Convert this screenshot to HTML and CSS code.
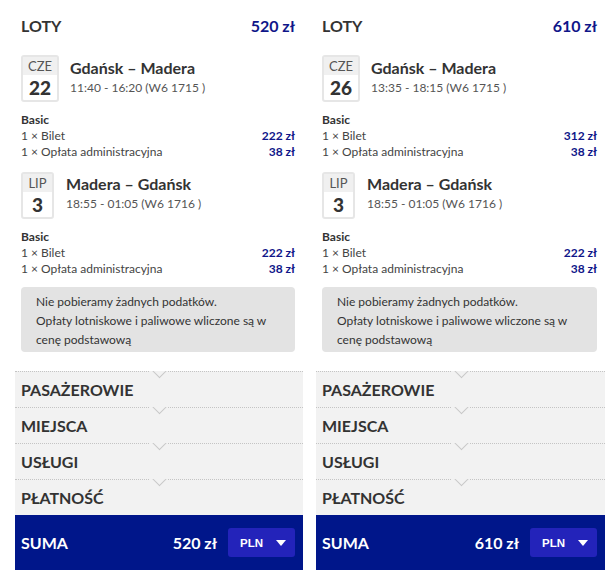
FILE: index.html
```html
<!DOCTYPE html>
<html lang="pl">
<head>
<meta charset="utf-8">
<link rel="stylesheet" href="styles.css">
</head>
<body>
<div class="page">
  <section class="col">
    <div class="content">
      <div class="head"><span class="h-title">LOTY</span><span class="h-price">520 zł</span></div>
      <div class="flight f1">
        <div class="date"><div class="dm">CZE</div><div class="dd">22</div></div>
        <div class="finfo"><div class="route">Gdańsk – Madera</div><div class="time">11:40 - 16:20 (W6 1715 )</div></div>
      </div>
      <div class="fare">
        <div class="fare-name">Basic</div>
        <div class="line"><span>1 × Bilet</span><b>222 zł</b></div>
        <div class="line"><span>1 × Opłata administracyjna</span><b>38 zł</b></div>
      </div>
      <div class="flight f2">
        <div class="date"><div class="dm">LIP</div><div class="dd">3</div></div>
        <div class="finfo"><div class="route">Madera – Gdańsk</div><div class="time">18:55 - 01:05 (W6 1716 )</div></div>
      </div>
      <div class="fare">
        <div class="fare-name">Basic</div>
        <div class="line"><span>1 × Bilet</span><b>222 zł</b></div>
        <div class="line"><span>1 × Opłata administracyjna</span><b>38 zł</b></div>
      </div>
      <div class="note">Nie pobieramy żadnych podatków.<br>Opłaty lotniskowe i paliwowe wliczone są w cenę podstawową</div>
    </div>
    <div class="steps">
      <div class="step"><span class="notch"></span>PASAŻEROWIE</div>
      <div class="step"><span class="notch"></span>MIEJSCA</div>
      <div class="step"><span class="notch"></span>USŁUGI</div>
      <div class="step"><span class="notch"></span>PŁATNOŚĆ</div>
    </div>
    <div class="sum">
      <span class="sum-label">SUMA</span>
      <span class="sum-val">520 zł</span>
      <span class="cur">PLN<span class="tri"></span></span>
    </div>
  </section>

  <section class="col">
    <div class="content">
      <div class="head"><span class="h-title">LOTY</span><span class="h-price">610 zł</span></div>
      <div class="flight f1">
        <div class="date"><div class="dm">CZE</div><div class="dd">26</div></div>
        <div class="finfo"><div class="route">Gdańsk – Madera</div><div class="time">13:35 - 18:15 (W6 1715 )</div></div>
      </div>
      <div class="fare">
        <div class="fare-name">Basic</div>
        <div class="line"><span>1 × Bilet</span><b>312 zł</b></div>
        <div class="line"><span>1 × Opłata administracyjna</span><b>38 zł</b></div>
      </div>
      <div class="flight f2">
        <div class="date"><div class="dm">LIP</div><div class="dd">3</div></div>
        <div class="finfo"><div class="route">Madera – Gdańsk</div><div class="time">18:55 - 01:05 (W6 1716 )</div></div>
      </div>
      <div class="fare">
        <div class="fare-name">Basic</div>
        <div class="line"><span>1 × Bilet</span><b>222 zł</b></div>
        <div class="line"><span>1 × Opłata administracyjna</span><b>38 zł</b></div>
      </div>
      <div class="note">Nie pobieramy żadnych podatków.<br>Opłaty lotniskowe i paliwowe wliczone są w cenę podstawową</div>
    </div>
    <div class="steps">
      <div class="step"><span class="notch"></span>PASAŻEROWIE</div>
      <div class="step"><span class="notch"></span>MIEJSCA</div>
      <div class="step"><span class="notch"></span>USŁUGI</div>
      <div class="step"><span class="notch"></span>PŁATNOŚĆ</div>
    </div>
    <div class="sum">
      <span class="sum-label">SUMA</span>
      <span class="sum-val">610 zł</span>
      <span class="cur">PLN<span class="tri"></span></span>
    </div>
  </section>
</div>
</body>
</html>
```

FILE: styles.css
```css
* { box-sizing: border-box; }
html, body { margin: 0; padding: 0; background: #fff; }
body {
  font-family: Lato, "Open Sans", "Liberation Sans", sans-serif;
  color: #333;
}
.page {
  display: grid;
  grid-template-columns: 288px 289px;
  column-gap: 13px;
  padding-left: 15px;
}
.col { display: flex; flex-direction: column; }
.content { padding: 0 8px 0 6px; }

.head {
  display: flex; justify-content: space-between; align-items: center;
  height: 30px; margin-top: 10px;
  font-weight: 700; font-size: 16px;
}
.h-title { color: #333; }
.h-price { color: #0f1689; }

.flight { display: flex; align-items: flex-start; }
.f1 { margin-top: 15px; }
.f2 { margin-top: 12px; }
.date {
  border: 2px solid #e6e6e6; border-radius: 3px;
  display: flex; flex-direction: column; align-items: stretch;
  text-align: center; height: 47px; padding: 0;
}
.f1 .date { width: 38px; }
.f2 .date { width: 33px; }
.dm {
  background: #f0f0f0; height: 18px; line-height: 18px;
  font-size: 13px; color: #555;
}
.dd {
  flex: 1; line-height: 25px; font-size: 19px; font-weight: 900; color: #333;
}
.finfo { margin-left: 11px; padding-top: 3px; }
.f2 .finfo { margin-left: 12px; padding-top: 2px; }
.route { font-size: 16px; font-weight: 700; color: #333; line-height: 20px; }
.time { font-size: 12px; color: #555; line-height: 18px; margin-top: 1px; }

.fare { margin-top: 10px; font-size: 12px; line-height: 16px; }
.fare-name { font-weight: 700; color: #333; }
.line { display: flex; justify-content: space-between; color: #444; }
.line b { color: #0f1689; font-weight: 700; }

.note {
  margin-top: 10px; background: #e3e3e3; border-radius: 4px;
  padding: 5px 20px 7px 15px; font-size: 12px; line-height: 19px; color: #333;
  height: 65px;
}

.steps { margin-top: 19px; background: #f2f2f2; }
.step {
  position: relative; height: 36px; line-height: 35px;
  padding-left: 6px; font-size: 16px; font-weight: 700; color: #333;
  border-top: 1px dotted #c4c4c4;
}
.notch {
  position: absolute; left: 50%; top: -1px; margin-left: -9px;
  width: 18px; height: 8px; background: #f2f2f2; overflow: hidden;
}
.notch::before {
  content: ""; position: absolute; left: 4px; top: -6px;
  width: 10px; height: 10px;
  border-right: 1px solid #c8c8c8; border-bottom: 1px solid #c8c8c8;
  transform: rotate(45deg);
}

.sum {
  display: flex; align-items: center; height: 55px;
  background: #00168a; color: #fff; padding: 0 8px 0 6px;
  font-weight: 700; font-size: 16px;
}
.sum-label { flex: 1; }
.cur {
  margin-left: 11px; width: 67px; height: 29px; border-radius: 3px;
  background: #2323ba; display: flex; align-items: center;
  padding-left: 12px; font-family: "Liberation Sans", Arial, sans-serif;
  font-size: 11.5px; font-weight: 700;
}
.tri {
  margin-left: 13px; width: 0; height: 0;
  border-left: 5px solid transparent; border-right: 5px solid transparent;
  border-top: 6px solid #fff;
}
```
